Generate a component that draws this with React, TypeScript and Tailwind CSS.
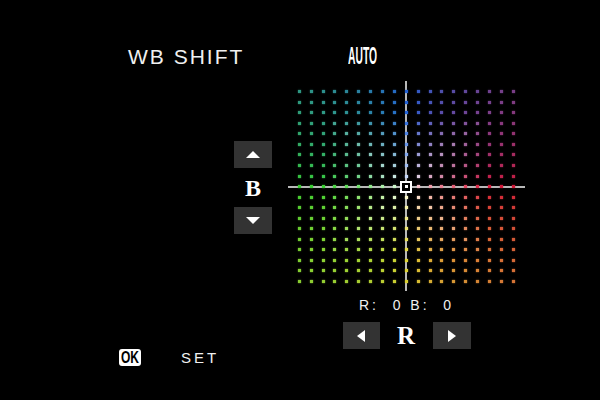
import React from 'react';

type RGB = [number, number, number];

const STEPS = 19;
const MID = 9;

// Tints toward each edge of the shift grid
const RED: RGB = [236, 28, 64];
const GREEN: RGB = [64, 230, 56];
const BLUE: RGB = [40, 110, 240];
const YELLOW: RGB = [246, 234, 56];

const dotColor = (col: number, row: number) => {
  const dx = (col - MID) / MID;
  const dy = (row - MID) / MID;
  const ax = Math.abs(dx);
  const ay = Math.abs(dy);
  const reach = Math.max(ax, ay);
  if (reach === 0) return 'rgb(255,255,255)';

  const hx = dx > 0 ? RED : GREEN;
  const hy = dy > 0 ? YELLOW : BLUE;
  const wx = ax / (ax + ay);
  const tint = hx.map((v, i) => v * wx + hy[i] * (1 - wx));
  const s = Math.min(1, Math.pow(reach, 0.7) * 1.2);
  const dim = 1 - 0.12 * reach;
  const [r, g, b] = tint.map((v) => Math.round((255 * (1 - s) + v * s) * dim));
  return `rgb(${r},${g},${b})`;
};

const ArrowButton: React.FC<{ dir: 'up' | 'down' | 'left' | 'right'; className?: string }> = ({ dir, className = '' }) => {
  const points = {
    up: '1,7 8,0 15,7',
    down: '1,0 8,7 15,0',
    left: '8,0 8,12 0,6',
    right: '0,0 0,12 8,6',
  }[dir];
  const vertical = dir === 'up' || dir === 'down';
  return (
    <div className={`flex h-[27px] items-center justify-center bg-[#333333] ${className}`}>
      <svg width={vertical ? 16 : 8} height={vertical ? 7 : 12} viewBox={vertical ? '0 0 16 7' : '0 0 8 12'}>
        <polygon points={points} fill="#ffffff" />
      </svg>
    </div>
  );
};

const ShiftGrid: React.FC = () => (
  <div className="relative h-[210px] w-[237px]">
    <div className="absolute left-[117.4px] top-0 h-full w-[2px] bg-[#b8b8b8]" />
    <div className="absolute left-0 top-[104.6px] h-[2px] w-full bg-[#b8b8b8]" />
    <div className="relative grid grid-cols-[repeat(19,11.9px)] grid-rows-[repeat(19,10.55px)] pl-[5.35px] pt-[5.4px]">
      {Array.from({ length: STEPS * STEPS }).map((_, i) => {
        const col = i % STEPS;
        const row = Math.floor(i / STEPS);
        const color = dotColor(col, row);
        return (
          <div key={i} className="flex items-center justify-center">
            <div className="h-[3px] w-[3px]" style={{ backgroundColor: color, boxShadow: `0 0 1.5px ${color}` }} />
          </div>
        );
      })}
    </div>
    {/* selection cursor */}
    <div className="absolute left-[112.4px] top-[99.6px] flex h-[12px] w-[12px] items-center justify-center border-2 border-white bg-black">
      <div className="h-[3px] w-[3px] bg-white" />
    </div>
  </div>
);

export default function App() {
  return (
    <div className="flex h-[400px] w-[600px] flex-col overflow-hidden bg-black font-['Liberation_Sans',Arial,sans-serif] text-[#f0f0f0]">
      <header className="flex h-[81px] items-baseline pl-[128px] pt-[44px]">
        <h1 className="text-[21px] font-normal leading-none tracking-[2px]">WB SHIFT</h1>
        <span className="ml-[104px] inline-block origin-left scale-x-[0.43] text-[24px] font-bold leading-none text-white">
          AUTO
        </span>
      </header>

      <div className="flex">
        <div className="ml-[234px] mt-[60px] flex w-[38px] flex-col items-stretch">
          <ArrowButton dir="up" />
          <span className="mt-[8px] text-center font-['Liberation_Serif',serif] text-[24px] font-bold leading-none text-white">
            B
          </span>
          <ArrowButton dir="down" className="mt-[7px]" />
        </div>

        <div className="ml-[16px] flex flex-col items-center">
          <ShiftGrid />
          <p className="mt-[7px] whitespace-pre text-[14px] leading-none tracking-[3px]">R:  0 B:  0</p>
          <div className="mt-[10px] flex items-center">
            <ArrowButton dir="left" className="w-[37px]" />
            <span className="w-[53px] text-center font-['Liberation_Serif',serif] text-[25px] font-bold leading-none text-white">
              R
            </span>
            <ArrowButton dir="right" className="w-[38px]" />
          </div>
        </div>
      </div>

      <footer className="flex h-[17px] items-center pl-[119px]">
        <div className="flex h-[17px] w-[22px] items-center justify-center rounded-[3px] bg-white">
          <span className="inline-block scale-x-[0.75] text-[16px] font-bold leading-none text-black">OK</span>
        </div>
        <span className="ml-[40px] text-[15px] leading-none tracking-[3px]">SET</span>
      </footer>
    </div>
  );
}
